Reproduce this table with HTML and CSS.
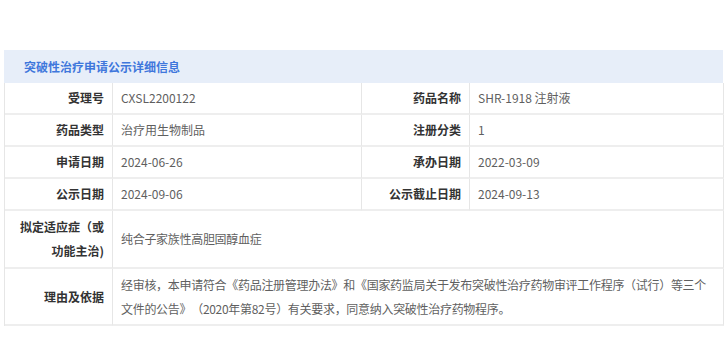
FILE: index.html
```html
<!DOCTYPE html>
<html lang="zh">
<head>
<meta charset="utf-8">
<link rel="stylesheet" href="styles.css">
</head>
<body>
<div class="panel">
  <div class="panel-title">突破性治疗申请公示详细信息</div>
  <div class="grid">
    <div class="label">受理号</div>
    <div class="value">CXSL2200122</div>
    <div class="label">药品名称</div>
    <div class="value">SHR-1918 注射液</div>

    <div class="label">药品类型</div>
    <div class="value">治疗用生物制品</div>
    <div class="label">注册分类</div>
    <div class="value">1</div>

    <div class="label">申请日期</div>
    <div class="value">2024-06-26</div>
    <div class="label">承办日期</div>
    <div class="value">2022-03-09</div>

    <div class="label">公示日期</div>
    <div class="value">2024-09-06</div>
    <div class="label">公示截止日期</div>
    <div class="value">2024-09-13</div>

    <div class="label tall">拟定适应症（或功能主治)</div>
    <div class="value wide">纯合子家族性高胆固醇血症</div>

    <div class="label tall">理由及依据</div>
    <div class="value wide">经审核，本申请符合《药品注册管理办法》和《国家药监局关于发布突破性治疗药物审评工作程序（试行）等三个文件的公告》（2020年第82号）有关要求，同意纳入突破性治疗药物程序。</div>
  </div>
</div>
</body>
</html>
```

FILE: styles.css
```css
html, body {
  margin: 0;
  padding: 0;
  background: #ffffff;
}

body {
  font-family: "Noto Sans CJK SC", "Microsoft YaHei", sans-serif;
  font-size: 12px;
  text-spacing-trim: space-all;
}

.panel {
  margin: 50px 0 0 4px;
  width: 719px;
}

.panel-title {
  height: 33px;
  line-height: 33px;
  box-sizing: border-box;
  padding-left: 20px;
  background: #e7eef9;
  color: #3f77dc;
  font-weight: bold;
  font-size: 12px;
}

.grid {
  display: grid;
  grid-template-columns: 108px 249px 108px 254px;
  border-left: 1px solid #e6e6e6;
}

.label,
.value {
  box-sizing: border-box;
  min-height: 32px;
  display: flex;
  align-items: center;
  border-right: 1px solid #e6e6e6;
  border-bottom: 2px solid #eeeeee;
  padding: 0 8px;
  line-height: 24px;
}

.label {
  justify-content: flex-end;
  text-align: right;
  font-weight: bold;
  color: #333333;
}

.value {
  color: #5f5f5f;
}

.tall {
  min-height: 57px;
  padding-top: 4px;
  padding-bottom: 4px;
}

.wide {
  grid-column: 2 / 5;
  letter-spacing: -0.3px;
}
```
